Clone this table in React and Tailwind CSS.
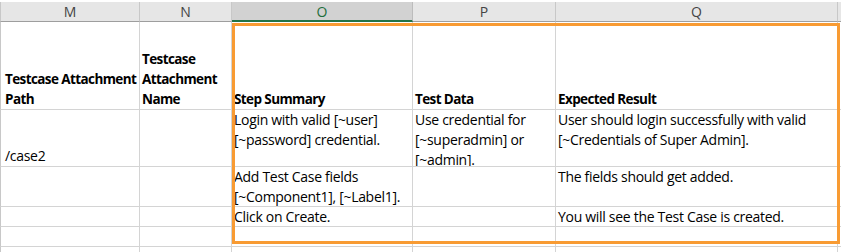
import React from 'react'

const COLS = [
  { key: 'M', w: 'w-[140px]', first: true },
  { key: 'N', w: 'w-[92px]' },
  { key: 'O', w: 'w-[181px]', selected: true },
  { key: 'P', w: 'w-[143px]' },
  { key: 'Q', w: 'w-[282px]' }
]

// lines are kept as Excel wrapped them
const ROWS = [
  {
    h: 'h-[88px]',
    cells: [
      { lines: ['Testcase Attachment', 'Path'], bold: true, align: 'end' },
      { lines: ['Testcase', 'Attachment', 'Name'], bold: true, align: 'end' },
      { lines: ['Step Summary'], bold: true, align: 'end' },
      { lines: ['Test Data'], bold: true, align: 'end' },
      { lines: ['Expected Result'], bold: true, align: 'end' }
    ]
  },
  {
    h: 'h-[57px]',
    cells: [
      { lines: ['/case2'], align: 'end' },
      {},
      { lines: ['Login with valid [~user]', '[~password] credential.'] },
      { lines: ['Use credential for', '[~superadmin] or', '[~admin].'] },
      { lines: ['User should login successfully with valid', '[~Credentials of Super Admin].'] }
    ]
  },
  {
    h: 'h-[40px]',
    cells: [
      {},
      {},
      { lines: ['Add Test Case fields', '[~Component1], [~Label1].'] },
      {},
      { lines: ['The fields should get added.'] }
    ]
  },
  {
    h: 'h-[20px]',
    cells: [
      {},
      {},
      { lines: ['Click on Create.'] },
      {},
      { lines: ['You will see the Test Case is created.'] }
    ]
  },
  { h: 'h-[20px]', cells: [{}, {}, {}, {}, {}] },
  { h: 'h-[20px]', cells: [{}, {}, {}, {}, {}] }
]

function Cell ({ col, cell, h }) {
  return (
    <div
      className={`${col.w} ${h} shrink-0 border-r border-b border-[#d4d4d4] overflow-hidden flex flex-col ${
        col.first ? 'border-l border-l-[#c8c8c8] pl-[2px]' : ''
      } ${cell.align === 'end' ? 'justify-end' : 'justify-start'}`}
    >
      {cell.lines &&
        cell.lines.map(line => (
          <div
            key={line}
            className={`shrink-0 px-[2px] whitespace-nowrap leading-[20px] text-black ${
              cell.bold ? 'font-bold text-[13.5px] tracking-[-0.6px]' : 'text-[14px] tracking-[-0.3px]'
            }`}
          >
            {line}
          </div>
        ))}
    </div>
  )
}

export default function App () {
  return (
    <div className="relative w-[841px] h-[252px] overflow-hidden bg-white font-['Open_Sans',sans-serif]">
      {/* column headers */}
      <div className="flex h-[22px] pt-[2px] bg-white">
        {COLS.map(col => (
          <div
            key={col.key}
            className={`${col.w} shrink-0 flex items-center justify-center border-r text-[14px] ${
              col.first ? 'border-l border-l-[#c8c8c8]' : ''
            } ${
              col.selected
                ? 'bg-[#d2d2d2] border-[#bcbcbc] border-b-2 border-b-[#217346] text-[#1f6e3c]'
                : 'bg-[#e6e6e6] border-[#c8c8c8] border-b border-b-[#9e9e9e] text-[#444]'
            }`}
          >
            {col.key}
          </div>
        ))}
        <div className="flex-1 bg-[#e6e6e6] border-b border-b-[#9e9e9e]" />
      </div>

      {ROWS.map((row, i) => (
        <div key={i} className="flex">
          {COLS.map((col, j) => (
            <Cell key={col.key} col={col} cell={row.cells[j]} h={row.h} />
          ))}
          <div className={`flex-1 ${row.h} border-b border-[#d4d4d4]`} />
        </div>
      ))}

      {/* selection outline */}
      <div className="absolute left-[232px] top-[23px] w-[608px] h-[221px] border-[3px] border-[#f89b33] pointer-events-none" />
    </div>
  )
}
